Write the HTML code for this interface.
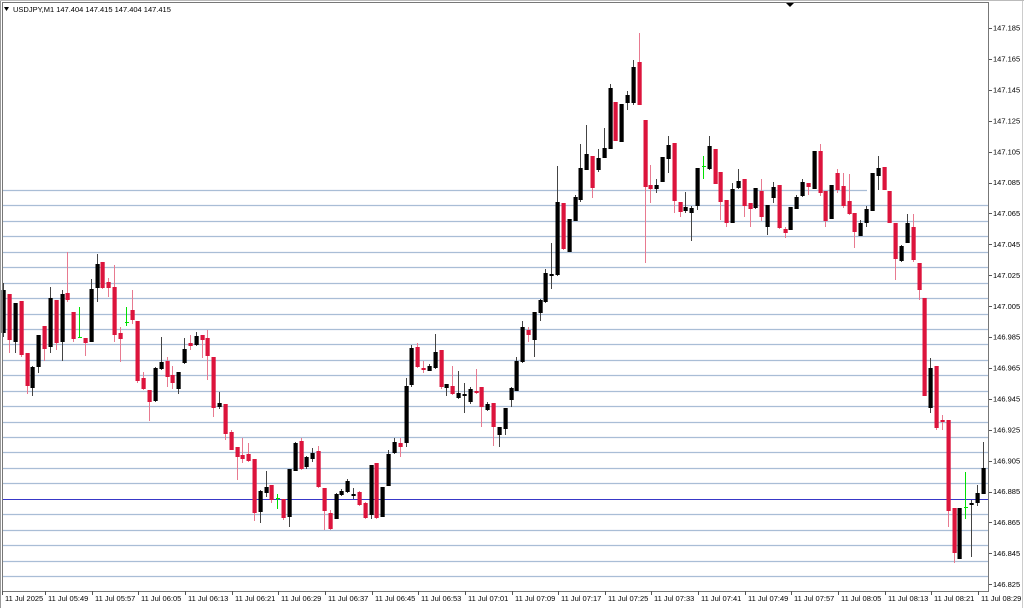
<!DOCTYPE html>
<html><head><meta charset="utf-8"><style>
body{margin:0;background:#fff;width:1024px;height:608px;overflow:hidden}
svg{display:block}
text{font-family:"Liberation Sans",sans-serif;font-size:7.5px;fill:#000}
</style></head><body>
<svg id="s" width="1024" height="608" xmlns="http://www.w3.org/2000/svg"></svg>
<script>
var D=[[290,333,283,337,0],[294,340,294,353,1],[303,342,303,353,0],[301,355,301,357,1],[353,386,353,394,1],[367,388,366,396,0],[335,367,335,373,0],[326,349,326,361,1],[298,347,287,353,0],[300,343,300,350,1],[294,342,290,361,0],[293,300,252,302,1],[312,339,312,342,1],[337,337,307,338,2],[338,343,338,356,1],[289,342,279,342,0],[264,288,254,302,0],[262,288,262,289,1],[282,288,278,297,1],[287,335,265,342,1],[333,339,327,362,1],[322,322,307,326,2],[310,320,290,324,1],[321,381,321,383,1],[378,389,372,390,1],[390,402,390,421,1],[368,401,367,402,0],[362,369,337,370,0],[361,377,357,387,1],[375,383,366,389,1],[372,389,372,394,0],[349,363,338,364,0],[343,346,335,350,1],[336,345,332,346,0],[335,340,335,358,1],[338,356,330,380,1],[357,408,357,417,1],[403,407,392,409,0],[404,434,404,440,1],[432,450,430,450,1],[447,457,447,480,1],[455,459,438,463,1],[454,461,443,462,1],[459,513,459,521,1],[491,512,490,523,0],[487,493,471,497,0],[485,500,485,503,1],[498,498,494,509,2],[499,518,499,520,1],[469,517,469,527,0],[443,471,442,471,0],[441,469,438,470,1],[457,467,456,469,0],[453,459,448,462,0],[451,487,446,488,1],[488,511,488,530,1],[513,529,510,530,1],[494,519,493,519,0],[491,495,489,496,0],[481,492,479,493,0],[494,496,488,499,0],[492,505,491,506,1],[503,518,502,519,1],[465,515,465,519,0],[463,518,463,519,1],[487,517,487,517,0],[454,486,450,486,0],[442,453,438,454,0],[443,447,438,457,1],[386,443,378,447,0],[348,385,345,387,0],[347,367,343,368,1],[368,370,361,373,1],[366,371,364,371,0],[352,368,334,369,0],[350,387,350,389,1],[384,388,384,396,0],[386,394,366,395,1],[393,398,371,399,0],[394,396,383,413,0],[389,402,387,404,0],[391,393,369,394,1],[387,407,387,427,1],[404,410,402,411,0],[403,427,403,446,1],[427,435,427,447,0],[408,429,408,435,0],[388,400,387,407,0],[361,391,357,391,0],[327,362,321,363,0],[330,335,327,342,1],[312,340,312,357,0],[300,313,299,321,0],[273,302,269,303,0],[274,276,243,289,0],[202,275,166,276,0],[203,249,203,250,1],[219,252,219,252,0],[197,221,195,221,0],[168,200,144,202,0],[154,170,125,170,0],[156,188,156,198,1],[158,170,149,172,0],[148,158,128,158,0],[88,149,84,149,0],[102,141,102,141,1],[104,142,104,142,0],[95,103,91,110,0],[67,103,60,105,0],[62,105,33,105,1],[120,187,120,263,1],[185,189,165,203,1],[185,189,179,193,0],[157,182,157,182,0],[145,159,136,173,0],[143,201,143,213,1],[202,212,202,217,1],[207,211,192,213,0],[208,213,206,241,0],[168,206,168,210,0],[166,166,156,179,2],[146,169,136,170,0],[149,184,149,184,1],[172,202,172,220,1],[200,223,200,227,1],[189,223,183,223,0],[181,188,169,189,0],[179,206,179,217,1],[203,209,203,227,1],[188,208,188,209,0],[191,217,179,221,1],[205,227,205,235,0],[187,198,182,203,0],[185,228,185,229,1],[229,233,227,238,1],[207,230,207,230,0],[197,209,195,209,0],[182,196,179,197,0],[183,187,183,195,1],[151,189,151,189,0],[151,193,144,196,1],[191,221,191,227,1],[185,219,185,219,0],[173,190,169,193,1],[186,206,173,208,1],[201,214,174,215,1],[213,232,213,248,1],[223,236,220,236,0],[209,223,206,227,0],[173,211,173,211,0],[168,176,156,190,0],[167,190,167,190,1],[191,223,191,223,1],[223,259,223,280,1],[246,261,245,262,0],[223,243,214,243,0],[227,260,214,262,1],[263,290,263,300,1],[298,396,298,396,1],[368,408,358,413,0],[366,428,366,430,1],[420,422,415,430,1],[420,511,420,527,1],[508,553,508,563,1],[508,559,508,559,0],[507,507,472,519,2],[503,505,500,557,0],[493,503,485,506,0],[468,494,442,494,0]];
var h='';
for(var k=0;k<26;k++){var y=Math.round(190+k*15.44)+0.5;
 if(k==20){h+='<line x1="3" x2="989" y1="'+y+'" y2="'+y+'" stroke="#3838c8" stroke-width="1"/>';continue;}
 var x2=k==0?867:989;
 h+='<line x1="3" x2="'+x2+'" y1="'+y+'" y2="'+y+'" stroke="#a9bdd6" stroke-width="1.2"/>';}
var col=['#000','#dc143c','#00e000'];
var wc=['#444','#e87a90','#00e000'];
for(var i=0;i<D.length;i++){var d=D[i],cx=Math.round(3.3+i*5.83);
 h+='<line x1="'+(cx+0.5)+'" x2="'+(cx+0.5)+'" y1="'+d[2]+'" y2="'+d[3]+'" stroke="'+wc[d[4]]+'" stroke-width="1"/>';
 if(d[4]==2){h+='<rect x="'+(cx-1)+'" y="'+d[0]+'" width="4" height="1" fill="#00e000"/>';}
 else{var bh=Math.max(2,d[1]-d[0]);h+='<rect x="'+(cx-1.5)+'" y="'+d[0]+'" width="4.2" height="'+bh+'" fill="'+col[d[4]]+'"/>';}}
h+='<rect x="2.5" y="2.5" width="986" height="589" fill="none" stroke="#777" stroke-width="1"/>';
h+='<line x1="0.5" x2="0.5" y1="0" y2="608" stroke="#999"/>';
h+='<line x1="1022.5" x2="1022.5" y1="0" y2="608" stroke="#ccc"/>';
h+='<line x1="0" x2="1024" y1="0.5" y2="0.5" stroke="#bbb"/>';
h+='<polygon points="786,3 794,3 790,7" fill="#000"/>';
h+='<polygon points="4,7 9,7 6.5,11" fill="#000"/>';
h+='<text x="13" y="12">USDJPY,M1  147.404 147.415 147.404 147.415</text>';
var P=['147.185','147.165','147.145','147.125','147.105','147.085','147.065','147.045','147.025','147.005','146.985','146.965','146.945','146.925','146.905','146.885','146.865','146.845','146.825'];
for(var k=0;k<P.length;k++){var y=28+k*30.9;
 h+='<line x1="989" x2="992" y1="'+(Math.round(y)+0.5)+'" y2="'+(Math.round(y)+0.5)+'" stroke="#555"/>';
 h+='<text x="993" y="'+(y+2.7)+'">'+P[k]+'</text>';}
var T=['2025','05:49','05:57','06:05','06:13','06:21','06:29','06:37','06:45','06:53','07:01','07:09','07:17','07:25','07:33','07:41','07:49','07:57','08:05','08:13','08:21','08:29'];
for(var k=0;k<T.length;k++){var x=k==0?5:Math.round(48+(k-1)*46.65);
 h+='<line x1="'+(x-2.5)+'" x2="'+(x-2.5)+'" y1="591" y2="595" stroke="#555"/>';
 h+='<text x="'+x+'" y="601">11 Jul '+T[k]+'</text>';}
document.getElementById('s').innerHTML=h;
</script>
</body></html>
